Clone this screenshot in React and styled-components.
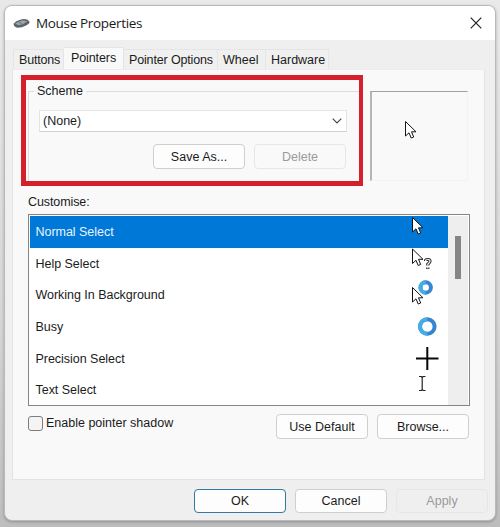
import React from "react";
import styled, { createGlobalStyle } from "styled-components";

const GlobalStyle = createGlobalStyle`
  * {
    box-sizing: border-box;
  }

  body {
    margin: 0;
    overflow: hidden;
    background: #dedede;
  }
`;

const Desktop = styled.div`
  width: 500px;
  height: 527px;
  padding: 5px 4px 6px;
  background: linear-gradient(#e9e9e9, #d6d6d6 60%, #bdbdbd);
  font-family: "Liberation Sans", Arial, sans-serif;
  font-size: 12.5px;
  color: #1b1b1b;
`;

const Window = styled.div`
  display: flex;
  flex-direction: column;
  height: 516px;
  border: 1px solid #b9b9b9;
  border-radius: 8px;
  background: #efefef;
  overflow: hidden;
  box-shadow: 0 1px 3px rgba(0, 0, 0, 0.25);
`;

const TitleBar = styled.div`
  display: flex;
  align-items: center;
  height: 34px;
  flex: none;
  padding: 0 13px 1px 8px;
  background: #fff;
`;

const Title = styled.div`
  flex: 1;
  margin-left: 5px;
  font-family: "Open Sans", "Noto Sans", sans-serif;
  font-size: 13.5px;
  letter-spacing: -0.33px;
  line-height: 18px;
`;

const Tabs = styled.div`
  display: flex;
  align-items: flex-end;
  height: 29px;
  flex: none;
  padding-left: 8px;
`;

const Tab = styled.div`
  width: ${props => props.$width}px;
  height: ${props => (props.$active ? 22 : 20)}px;
  padding: ${props => (props.$active ? "3px 0 0 7px" : "3px 0 0 5px")};
  line-height: 15px;
  letter-spacing: ${props => props.$spacing || 0}px;
  white-space: nowrap;
  border: 1px solid #e5e5e5;
  border-left-width: ${props => (props.$first ? 1 : 0)}px;
  border-bottom: 0;
  background: ${props => (props.$active ? "#f9f9f9" : "#f0f0f0")};
`;

const Page = styled.div`
  height: 411px;
  flex: none;
  margin: 0 10px 0 7px;
  padding: 5px 15px 0;
  border: 1px solid #e4e4e4;
  border-top-color: #ececec;
  background: #f9f9f9;
`;

const TopRow = styled.div`
  display: flex;
  align-items: flex-start;
  gap: 7px;
  margin-left: -7px;
`;

const Highlight = styled.div`
  width: 342px;
  height: 111px;
  padding: 0 0 0 2px;
  border: 5px solid #d3202c;
  border-width: 5px 4px 5px 5px;
`;

const Scheme = styled.div`
  height: 101px;
  padding-right: 12px;
`;

const Legend = styled.div`
  display: flex;
  align-items: center;
  height: 22px;
  margin-right: -12px;
  gap: 3px;

  &::before,
  &::after {
    content: "";
    height: 1px;
    width: 6px;
    background: #dcdcdc;
  }

  &::after {
    flex: 1;
  }
`;

const SchemeBody = styled.div`
  height: 90px;
  margin-top: -11px;
  padding: 19px 0 0 10px;
  border-left: 1px solid #dcdcdc;
`;

const Select = styled.div`
  display: flex;
  align-items: center;
  justify-content: space-between;
  height: 22px;
  padding: 0 4px 0 3px;
  border: 1px solid #e4e4e4;
  border-bottom-color: #cfcfcf;
  background: #fff;
`;

const Buttons = styled.div`
  display: flex;
  justify-content: flex-end;
  gap: 9px;
`;

const SchemeButtons = styled(Buttons)`
  margin: 12px 1px 0 0;
`;

const Button = styled.button`
  width: 92px;
  height: 25px;
  padding: 0;
  font: inherit;
  color: ${props => (props.disabled ? "#9b9b9b" : "#1b1b1b")};
  border: 1px solid ${props => (props.$primary ? "#33789f" : props.disabled ? "#e6e6e6" : "#cfcfcf")};
  border-radius: 4px;
  background: ${props => (props.disabled ? "transparent" : "#fdfdfd")};
`;

const Preview = styled.div`
  width: 98px;
  height: 90px;
  margin-top: 16px;
  padding: 29px 0 0 33px;
  border: 1px solid #f3f3f3;
  border-top-color: #a0a0a0;
  border-left: 2px solid #b5b5b5;
`;

const Caption = styled.div`
  height: 28px;
  padding-top: 9px;
  line-height: 15px;
  letter-spacing: -0.1px;
`;

const List = styled.div`
  display: flex;
  width: 442px;
  height: 192px;
  padding: 1px 1px 0;
  border: 1px solid #858585;
  background: #fff;
`;

const Rows = styled.div`
  flex: 1;
`;

const Row = styled.div`
  display: flex;
  justify-content: space-between;
  height: 31.65px;
  padding-left: 5.5px;
  line-height: 33px;
  letter-spacing: -0.03px;
  color: ${props => (props.$selected ? "#e9f4ff" : "inherit")};
  background: ${props => (props.$selected ? "#0078d7" : "transparent")};
`;

const Glyph = styled.svg`
  display: block;
  flex: none;
`;

const ScrollBar = styled.div`
  width: 20px;
  padding: 20px 0 0 7px;
  background: #eee;
`;

const Thumb = styled.div`
  width: 6px;
  height: 43px;
  background: #858585;
`;

const Options = styled.div`
  display: flex;
  justify-content: space-between;
  width: 441px;
  margin-top: 8px;
`;

const CheckLabel = styled.label`
  display: flex;
  align-items: center;
  height: 18px;
  gap: 3px;
`;

const Box = styled.span`
  width: 15px;
  height: 15px;
  border: 1px solid #7d7d7d;
  border-radius: 3px;
  background: #f4f4f4;
`;

const Footer = styled(Buttons)`
  padding: 9px 7px 0;

  ${Button} {
    height: 24px;
  }
`;

const Arrow = ({ x = 0, y = 0 }) => (
  <path
    transform={`translate(${x} ${y})`}
    d="M.5.5V15L4 11.8 6.2 17 8.7 16 6.5 10.8H11Z"
    fill="#fff"
    stroke="#151515"
    strokeWidth="1"
  />
);

const Ring = ({ cx, cy, r }) => (
  <g fill="none">
    <circle cx={cx} cy={cy} r={r} stroke="#3585cf" strokeWidth="4" />
    <path
      d={`M${cx} ${cy + r}A${r} ${r} 0 0 1 ${cx} ${cy - r}`}
      stroke="#45ade6"
      strokeWidth="4"
    />
  </g>
);

// every glyph shares a 40x31 cell at the right end of its row
const glyphs = {
  normal: <Arrow x={4} y={1} />,
  help: (
    <>
      <Arrow x={4} y={0.5} />
      <path
        d="M17.5 13Q17.5 11.5 19.8 11.5T22 13.3Q22 14.5 19.8 16.3V17.5M19.8 19.5V21"
        fill="none"
        stroke="#222"
        strokeWidth="3.2"
      />
      <path
        d="M17.5 13Q17.5 11.5 19.8 11.5T22 13.3Q22 14.5 19.8 16.3V17.5M19.8 19.3V20.5"
        fill="none"
        stroke="#fff"
        strokeWidth="1.2"
      />
    </>
  ),
  working: (
    <>
      <Arrow x={4} y={8} />
      <Ring cx={17.7} cy={8.5} r={5.2} />
    </>
  ),
  busy: <Ring cx={19.3} cy={15.5} r={7.3} />,
  precision: (
    <path d="M8 15.5H30.5M19.3 4V27" fill="none" stroke="#080808" strokeWidth="2" />
  ),
  text: (
    <path
      d="M11 2.5H13.2L14.2 3.5 15.2 2.5H17.5M11 16.5H13.2L14.2 15.5 15.2 16.5H17.5M14.2 3.5V15.5"
      fill="none"
      stroke="#222"
      strokeWidth="1.2"
    />
  )
};

const pointers = [
  ["Normal Select", "normal"],
  ["Help Select", "help"],
  ["Working In Background", "working"],
  ["Busy", "busy"],
  ["Precision Select", "precision"],
  ["Text Select", "text"]
];

const MouseIcon = () => (
  <Glyph width="18" height="12" viewBox="0 0 18 12">
    <path d="M.5 7Q2 4 9 2.2 14 1.5 16.5 4.5 17 6.5 13 8.5 9 10.8 4.5 10.8 1 10 .5 7Z" fill="#59636a" />
    <path d="M2 6.8Q5 4.2 9.5 3.2L14.5 4.3Q11 7.5 6 8.3Z" fill="#99a4aa" />
    <path d="M5.5 4.8L9 7" stroke="#626d74" strokeWidth="0.8" fill="none" />
  </Glyph>
);

const App = () => (
  <Desktop>
    <GlobalStyle />
    <Window>
      <TitleBar>
        <MouseIcon />
        <Title>Mouse Properties</Title>
        <Glyph width="12" height="12" viewBox="0 0 12 12">
          <path d="M.7.7L11.3 11.3M11.3.7L.7 11.3" stroke="#222" strokeWidth="1.2" />
        </Glyph>
      </TitleBar>
      <Tabs>
        <Tab $width={51} $spacing={-0.2} $first>Buttons</Tab>
        <Tab $width={60} $spacing={-0.1} $active>Pointers</Tab>
        <Tab $width={94} $spacing={-0.15}>Pointer Options</Tab>
        <Tab $width={48}>Wheel</Tab>
        <Tab $width={63}>Hardware</Tab>
      </Tabs>
      <Page>
        <TopRow>
          <Highlight>
            <Scheme>
              <Legend>Scheme</Legend>
              <SchemeBody>
                <Select>
                  (None)
                  <Glyph width="10" height="6" viewBox="0 0 10 6">
                    <path d="M.7.7L5 5 9.3.7" fill="none" stroke="#444" strokeWidth="1.1" />
                  </Glyph>
                </Select>
                <SchemeButtons>
                  <Button>Save As...</Button>
                  <Button disabled>Delete</Button>
                </SchemeButtons>
              </SchemeBody>
            </Scheme>
          </Highlight>
          <Preview>
            <Glyph width="12" height="19" viewBox="0 0 12 19">
              <Arrow />
            </Glyph>
          </Preview>
        </TopRow>
        <Caption>Customise:</Caption>
        <List>
          <Rows>
            {pointers.map(([name, glyph], index) => (
              <Row key={name} $selected={index === 0}>
                {name}
                <Glyph width="40" height="31" viewBox="0 0 40 31">
                  {glyphs[glyph]}
                </Glyph>
              </Row>
            ))}
          </Rows>
          <ScrollBar>
            <Thumb />
          </ScrollBar>
        </List>
        <Options>
          <CheckLabel>
            <Box />
            Enable pointer shadow
          </CheckLabel>
          <Buttons>
            <Button>Use Default</Button>
            <Button>Browse...</Button>
          </Buttons>
        </Options>
      </Page>
      <Footer>
        <Button $primary>OK</Button>
        <Button>Cancel</Button>
        <Button disabled>Apply</Button>
      </Footer>
    </Window>
  </Desktop>
);

export default App;
